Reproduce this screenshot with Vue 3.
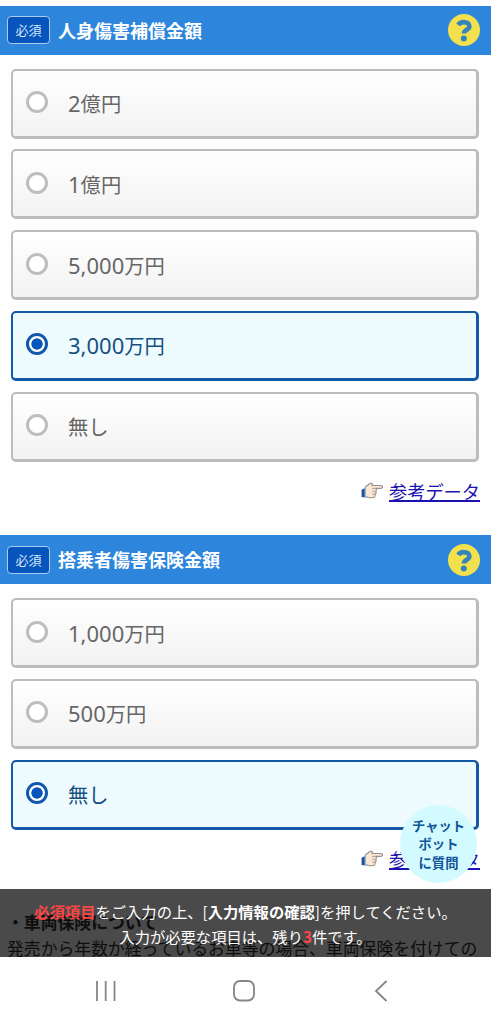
<script setup>
const sections = [
  {
    title: '人身傷害補償金額',
    options: [
      { num: '2', unit: '億円' },
      { num: '1', unit: '億円' },
      { num: '5,000', unit: '万円' },
      { num: '3,000', unit: '万円', selected: true },
      { num: '', unit: '無し' },
    ],
  },
  {
    title: '搭乗者傷害保険金額',
    options: [
      { num: '1,000', unit: '万円' },
      { num: '500', unit: '万円' },
      { num: '', unit: '無し', selected: true },
    ],
  },
]
</script>

<template>
  <div class="screen">
    <main class="content">
      <section v-for="s in sections" :key="s.title" class="section">
        <header class="bar">
          <span class="badge">必須</span>
          <h2 class="title">{{ s.title }}</h2>
          <svg class="help" viewBox="0 0 32 32" width="32" height="32">
            <circle cx="16" cy="16" r="16" fill="#f2e14c" />
            <path d="M10.200 11C11.400 9 13.300 8.100 15.800 8.100c3.300 0 5.600 1.500 5.600 4.100 0 3.700-5.500 3.300-5.500 7.300" fill="none" stroke="#3585bb" stroke-width="4.600" />
            <circle cx="15.800" cy="24.500" r="3" fill="#3585bb" />
          </svg>
        </header>
        <div class="options">
          <div v-for="(o, i) in s.options" :key="i" class="option" :class="{ selected: o.selected }">
            <span class="radio"></span>
            <span class="label"><span class="num">{{ o.num }}</span>{{ o.unit }}</span>
          </div>
        </div>
        <div class="more">
          <svg class="hand" viewBox="0 0 22 18" width="22" height="18">
            <path d="M4.300 5 8.500 1.700Q10.500.600 11.700 2l-.800 1.500h9.200q1.700.200 1.500 1.700-.200 1.200-1.600 1.200h-5.200l.700 1.200-.600 1.800.200 1.800-1.200 1.600.100 1.400q-.500 1.500-2.200 1.500H8l-3.700-1.300z" fill="#fbe5d3" stroke="#96918c" stroke-width="1.100" stroke-linejoin="round" />
            <path d="M11 6.400h4M11.500 9.200h3.600M11.200 12h3" fill="none" stroke="#aaa198" stroke-width="1" />
            <path d="M.600 7.700 4.400 5.900v9.600L.600 15z" fill="#214f91" />
            <path d="m3.500 6.200 1.400-.500v10l-1.400-.400z" fill="#8fb4d8" />
          </svg>
          <a class="link">参考データ</a>
        </div>
      </section>
      <div class="notes">
        <div><b>・車両保険について</b></div>
        <div>発売から年数が経っているお車等の場合、車両保険を付けての</div>
      </div>
    </main>

    <div class="chatbot">
      <span>チャット</span><span>ボット</span><span>に質問</span>
    </div>

    <div class="toast">
      <div><b class="red">必須項目</b>をご入力の上、[<b>入力情報の確認</b>]を押してください。</div>
      <div>入力が必要な項目は、残り<b class="red">3</b>件です。</div>
    </div>

    <nav class="nav">
      <svg viewBox="0 0 22 22" width="22" height="22"><path d="M2 1v20M10.700 1v20M19.500 1v20" /></svg>
      <svg viewBox="0 0 22 22" width="22" height="22"><rect x="1" y="1" width="20" height="19.500" rx="6" /></svg>
      <svg viewBox="0 0 22 22" width="22" height="22"><path d="M16.500 1 6 11 16.500 21" /></svg>
    </nav>
  </div>
</template>

<style>
body {
  background: #fefefe;
}
</style>

<style scoped>
.screen {
  position: relative;
  width: 491px;
  height: 1024px;
  overflow: hidden;
  background: #fefefe;
  font-family: "Noto Sans", "Noto Sans CJK JP", sans-serif;
}
.content {
  padding-top: 5.5px;
}
.section {
  height: 529.5px;
}
.section + .section {
  height: 373.5px;
}
.bar {
  display: flex;
  align-items: center;
  box-sizing: border-box;
  height: 49px;
  padding: 0 11px 0 7px;
  background: #2d86dc;
  color: #fff;
}
.badge {
  box-sizing: border-box;
  width: 43px;
  height: 28px;
  border: 1.5px solid #a9cdf3;
  border-radius: 4px;
  background: #0754bd;
  color: #d5e8fb;
  font: 13px/25px "Noto Sans CJK JP", sans-serif;
  text-align: center;
}
.title {
  flex: 1;
  margin: 0 0 0 8px;
  font: bold 18px/27px "Noto Sans CJK JP", sans-serif;
}
.options {
  display: flex;
  flex-direction: column;
  gap: 10.8px;
  padding: 14px 12px 0 11px;
}
.option {
  display: flex;
  align-items: center;
  box-sizing: border-box;
  height: 70px;
  padding: 0 13px;
  border: 2px solid #bcbcbc;
  border-bottom-width: 3px;
  border-right-width: 3px;
  border-radius: 5px;
  background: linear-gradient(#fff, #f2f2f2);
  color: #666;
}
.option.selected {
  border: 2.5px solid #1558a5;
  border-bottom-width: 3px;
  border-right-width: 3px;
  background: #edfbff;
  color: #17507f;
}
.radio {
  box-sizing: border-box;
  width: 22px;
  height: 22px;
  margin-bottom: 2px;
  border: 3px solid #bdbdbd;
  border-radius: 50%;
  background: #fff;
}
.selected .radio {
  border-color: #1256ad;
  background: radial-gradient(circle, #0754bd 5.3px, #fff 6px);
}
.label {
  margin-left: 20px;
  font: 20.3px/30px "Noto Sans CJK JP", sans-serif;
}
.num {
  font: 22px/30px "Noto Sans", sans-serif;
}
.more {
  display: flex;
  align-items: center;
  justify-content: flex-end;
  height: 28px;
  margin-top: 15.5px;
  padding-right: 11px;
}
.hand {
  margin-right: 6px;
}
.link {
  color: #1a11b0;
  font: 18.2px/28px "Noto Sans CJK JP", sans-serif;
  text-decoration: underline;
  text-underline-offset: 1px;
  text-decoration-thickness: 1.5px;
}
.notes {
  padding-left: 7px;
  color: #333;
  font: 16.83px/26px "Noto Sans CJK JP", sans-serif;
  white-space: nowrap;
}
.chatbot {
  position: absolute;
  left: 400px;
  top: 805px;
  display: flex;
  flex-direction: column;
  align-items: center;
  justify-content: center;
  box-sizing: border-box;
  width: 77px;
  height: 78px;
  padding-top: 1px;
  border-radius: 50%;
  background: #d3faff;
  color: #0f5599;
  font: bold 13.3px/18.5px "Noto Sans CJK JP", sans-serif;
}
.toast {
  position: absolute;
  left: 0;
  right: 0;
  top: 889px;
  box-sizing: border-box;
  height: 68px;
  padding-top: 10px;
  background: rgba(0, 0, 0, 0.71);
  color: #fff;
  font: 15.3px/24.5px "Noto Sans CJK JP", sans-serif;
  text-align: center;
  white-space: nowrap;
}
.red {
  color: #ff4545;
}
.nav {
  position: absolute;
  left: 0;
  right: 0;
  bottom: 0;
  display: flex;
  box-sizing: border-box;
  height: 67px;
  padding: 23px 99px 0 95px;
  justify-content: space-between;
  background: #fefefe;
}
.nav svg {
  fill: none;
  stroke: #858585;
  stroke-width: 1.8;
}
</style>
